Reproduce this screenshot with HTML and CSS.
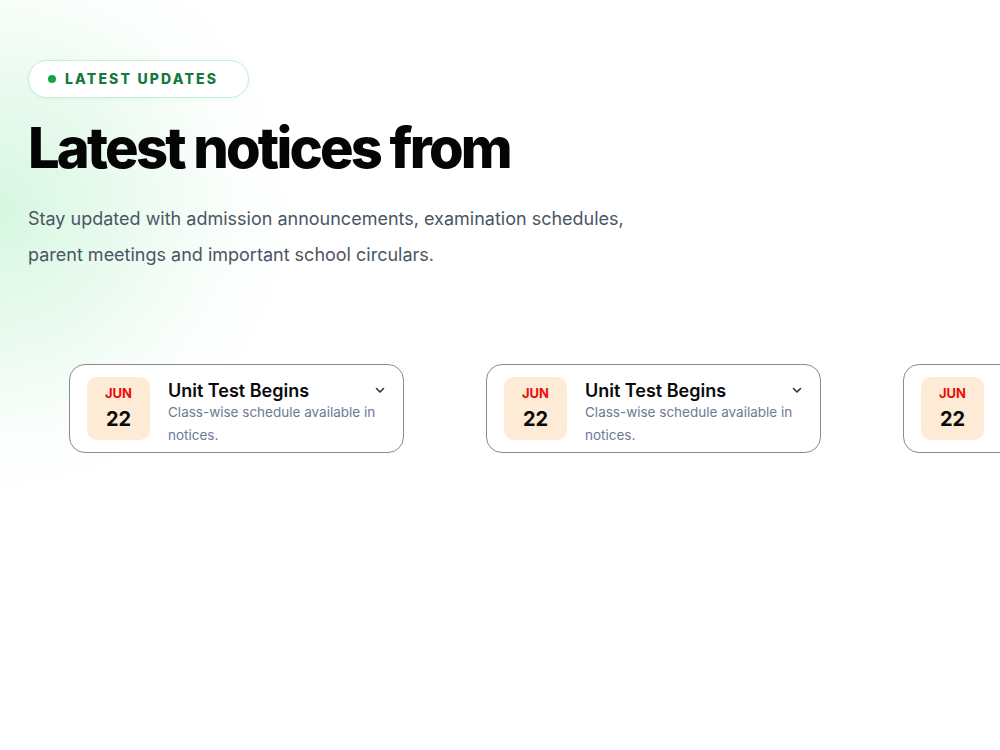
FILE: index.html
```html
<!DOCTYPE html>
<html lang="en">
<head>
    <meta charset="UTF-8">
    <meta name="viewport" content="width=device-width, initial-scale=1.0">
    <title>Notices</title>
    <link rel="stylesheet" href="styles.css">
</head>
<body>

    <section class="notices">
        <div class="glow"></div>

        <div class="notices-header">
            <span class="badge"><span class="badge-dot"></span>LATEST UPDATES</span>
            <h1>Latest notices from</h1>
            <p class="lead">Stay updated with admission announcements, examination schedules,<br>parent meetings and important school circulars.</p>
        </div>

        <div class="track">
            <div class="notice-card">
                <div class="date-box">
                    <span class="month">JUN</span>
                    <span class="day">22</span>
                </div>
                <div class="notice-body">
                    <div class="notice-top">
                        <h3>Unit Test Begins</h3>
                        <svg class="chevron" width="12" height="12" viewBox="0 0 24 24" fill="none" stroke="currentColor" stroke-width="3.2" stroke-linecap="round" stroke-linejoin="round"><path d="M5 9l7 7 7-7"/></svg>
                    </div>
                    <p>Class-wise schedule available in notices.</p>
                </div>
            </div>

            <div class="notice-card">
                <div class="date-box">
                    <span class="month">JUN</span>
                    <span class="day">22</span>
                </div>
                <div class="notice-body">
                    <div class="notice-top">
                        <h3>Unit Test Begins</h3>
                        <svg class="chevron" width="12" height="12" viewBox="0 0 24 24" fill="none" stroke="currentColor" stroke-width="3.2" stroke-linecap="round" stroke-linejoin="round"><path d="M5 9l7 7 7-7"/></svg>
                    </div>
                    <p>Class-wise schedule available in notices.</p>
                </div>
            </div>

            <div class="notice-card">
                <div class="date-box">
                    <span class="month">JUN</span>
                    <span class="day">22</span>
                </div>
                <div class="notice-body">
                    <div class="notice-top">
                        <h3>Unit Test Begins</h3>
                        <svg class="chevron" width="12" height="12" viewBox="0 0 24 24" fill="none" stroke="currentColor" stroke-width="3.2" stroke-linecap="round" stroke-linejoin="round"><path d="M5 9l7 7 7-7"/></svg>
                    </div>
                    <p>Class-wise schedule available in notices.</p>
                </div>
            </div>
        </div>
    </section>

</body>
</html>
```

FILE: styles.css
```css
*{
    box-sizing: border-box;
}

body{
    margin: 0;
    font-family: Inter, "Noto Sans", sans-serif;
    background: #ffffff;
    color: #0a0a0a;
    overflow: hidden;
}

.notices{
    position: relative;
    min-height: 750px;
    padding-top: 60px;
    overflow: hidden;
}

.glow{
    position: absolute;
    left: -330px;
    top: -90px;
    width: 640px;
    height: 600px;
    border-radius: 50%;
    background: radial-gradient(closest-side, rgba(206, 245, 219, 0.85), rgba(222, 248, 231, 0.6) 45%, rgba(240, 252, 244, 0.3) 75%, rgba(255, 255, 255, 0) 100%);
    pointer-events: none;
}

.notices-header{
    position: relative;
    padding: 0 28px;
}

.badge{
    display: inline-flex;
    align-items: center;
    gap: 9px;
    height: 38px;
    width: 221px;
    padding: 0 19px 1px;
    border: 1.5px solid #c4f1d3;
    border-radius: 999px;
    background: #ffffff;
    box-shadow: 0 1px 4px rgba(34, 197, 94, 0.08);
    color: #157a3c;
    font-size: 14px;
    font-weight: 800;
    letter-spacing: 0.155em;
}

.badge-dot{
    width: 8px;
    height: 8px;
    border-radius: 50%;
    background: #16a34a;
}

h1{
    margin: 16px 0 0;
    font-size: 56px;
    line-height: 68px;
    font-weight: 800;
    letter-spacing: -0.05em;
    color: #050505;
}

.lead{
    margin: 19px 0 0;
    font-size: 18px;
    line-height: 36px;
    color: #4b5563;
}

.track{
    position: relative;
    display: flex;
    gap: 82px;
    padding-left: 69px;
    margin-top: 91px;
}

.notice-card{
    flex: 0 0 335px;
    display: flex;
    align-items: flex-start;
    gap: 18px;
    height: 89px;
    padding: 12px 17px 0 17px;
    border: 1.5px solid #8c8c8c;
    border-radius: 16px;
    background: #ffffff;
}

.date-box{
    flex: 0 0 63px;
    height: 63px;
    display: flex;
    flex-direction: column;
    align-items: center;
    justify-content: center;
    gap: 9px;
    padding-bottom: 2px;
    border-radius: 10px;
    background: #fdebd5;
}

.month{
    font-size: 13px;
    font-weight: 700;
    color: #f00a0a;
    line-height: 14px;
}

.day{
    font-size: 20px;
    font-weight: 700;
    line-height: 20px;
    color: #0a0a0a;
}

.notice-body{
    flex: 1;
    min-width: 0;
}

.notice-top{
    display: flex;
    align-items: center;
    justify-content: space-between;
}

.notice-body h3{
    margin: 2px 0 0;
    font-size: 18px;
    font-weight: 600;
    line-height: 24px;
}

.notice-body p{
    margin: -2px 0 0;
    font-size: 13.5px;
    line-height: 22.5px;
    color: #6c7a95;
}

.chevron{
    color: #333;
}
```
